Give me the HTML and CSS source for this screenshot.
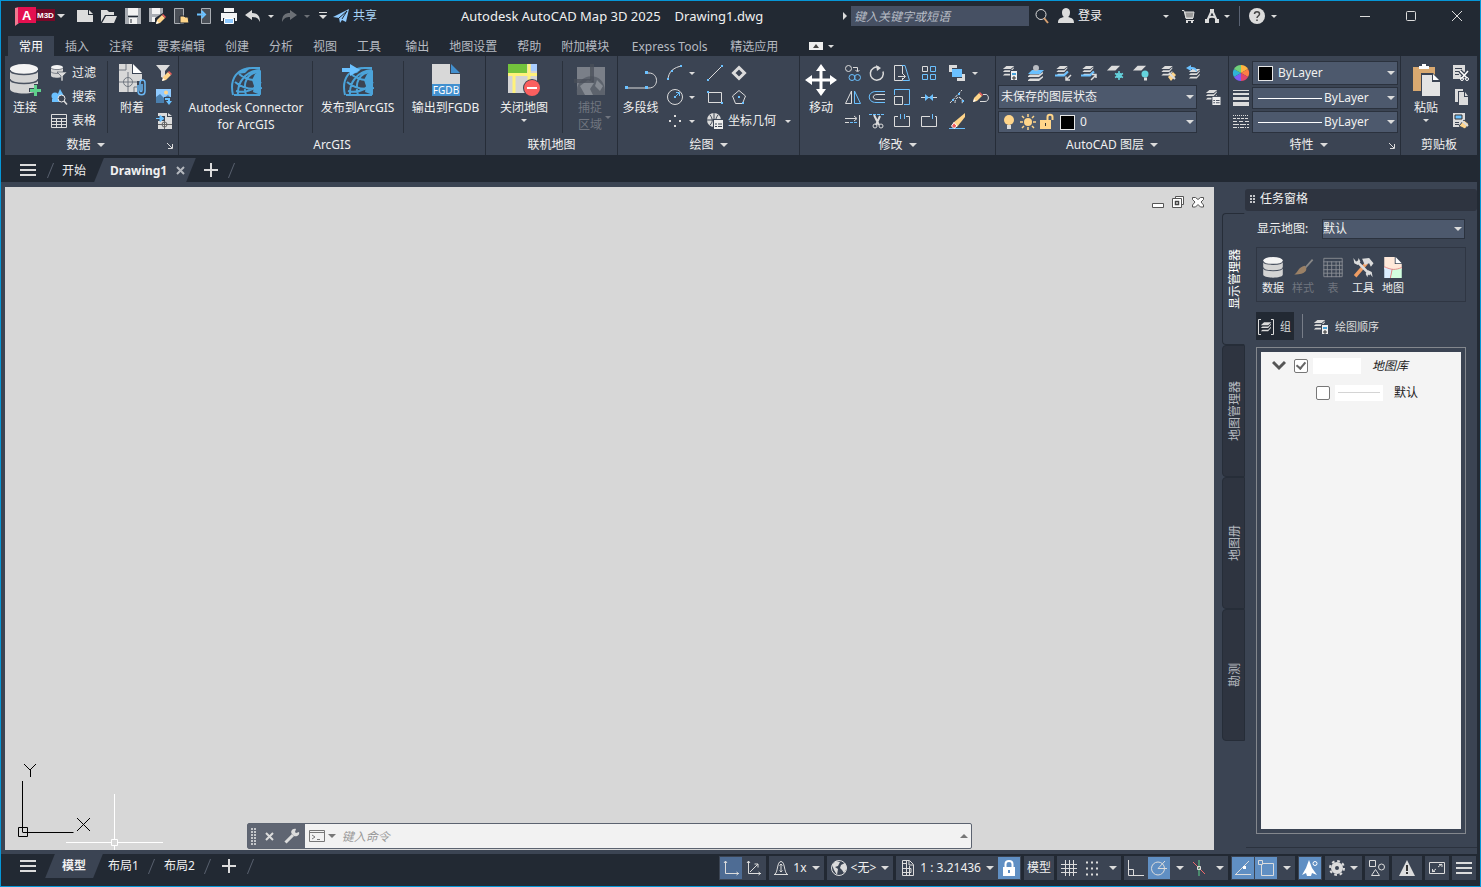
FILE: index.html
```html
<!DOCTYPE html>
<html lang="zh-CN">
<head>
<meta charset="utf-8">
<title>Autodesk AutoCAD Map 3D 2025</title>
<link rel="stylesheet" href="styles.css">
</head>
<body>
<svg class="defs" aria-hidden="true">
  <symbol id="layers" viewBox="0 0 16 16"><path d="M5 1h9l-4 3.500H1zM1 8l2-2h7l3.500-3.500V4L10 8zM1 12l2-2h7l3.500-3.500V8L10 12z" fill="#dcdcdc"/></symbol>
  <symbol id="sheet" viewBox="0 0 16 16"><path d="M6 3h9l-5 5H1z" fill="#dcdcdc"/></symbol>
  <symbol id="db" viewBox="0 0 28 30"><path d="M0 5v20c0 6 28 6 28 0V5z" fill="#d4d4d4"/><ellipse cx="14" cy="5" rx="14" ry="5" fill="#f4f4f4"/><path d="M0 6c0 6 28 6 28 0M0 15c0 6 28 6 28 0" fill="none" stroke="#4a5260" stroke-width="1.500"/></symbol>
  <symbol id="arc" viewBox="0 0 32 32"><path d="M3 31C-1 14 8 4 22 4h8M8 31C7 18 16 7 30 6M16 31C12 18 18 8 30 8M5 18c7 6 17 8 27 6M9 10c7 6 14 7 21 5M6 27c8 2 17 0 25-9M4 31h26" fill="none" stroke="#4ba3d9" stroke-width="2"/><path d="M22 16l3-6 6-4v25l-8-3 1-6zM7 10l6-5 8-2-6 6z" fill="#4ba3d9"/></symbol>
  <symbol id="list" viewBox="0 0 10 10"><path d="M0 0h10v10H0z" fill="#3b4453"/><path d="M1 1h9v9H1z" fill="#eee"/><path d="M2 5h2M5 5h4M2 7.500h2M5 7.500h4" stroke="#3b4453"/></symbol>
  <symbol id="pencil" viewBox="0 0 10 10"><path d="M0 10l1-4 5-5 3 3-5 5z" fill="#ffd58a"/><path d="M6 1l1-1 3 3-1 1z" fill="#f05b5b"/><path d="M0 10l1-3 2 2z" fill="#fff"/></symbol>
</svg>

<header class="titlebar">
  <div class="quick">
    <button class="logo" aria-label="应用程序菜单"><svg viewBox="0 0 42 19"><path d="M1 1l4-1v16l-4 3z" fill="#f07a90"/><path d="M4 0h18v16H4z" fill="#e51050"/><path d="M22 2h19v12H22z" fill="#7a0828"/><text x="8" y="13" class="logo-a">A</text><text x="23" y="11" class="logo-m">M3D</text></svg></button>
    <span class="caret lead"></span>
    <button class="q" aria-label="新建"><svg class="i" viewBox="0 0 16 16"><path class="fl" d="M0 2h11v5h5v7H0zM12 2l4 4h-4z"/></svg></button>
    <button class="q" aria-label="打开"><svg class="i" viewBox="0 0 16 16"><path class="fl" d="M0 2h6l2 2h5v3H4L0 14zM5 8h11l-3 7H1z"/></svg></button>
    <button class="q" aria-label="保存"><svg class="i" viewBox="0 0 16 16"><path fill="#a9adb3" stroke="none" d="M0 0h16v16H0z"/><path fill="#f3f3f3" stroke="none" d="M3 0h10v7H3zM4 10h8v6H4z"/><path stroke="#222933" d="M3 8.500h10M6 11v4"/></svg></button>
    <button class="q" aria-label="另存为"><svg class="i" viewBox="0 0 16 16"><path fill="#a9adb3" stroke="none" d="M0 0h14v14H0z"/><path fill="#f3f3f3" stroke="none" d="M3 0h8v6H3zM3 9h6v5H3z"/><path fill="#222933" stroke="none" d="M6 16V10l8-5 2 3v8z"/><use href="#pencil" x="7" y="6" width="10" height="10"/></svg></button>
    <button class="q" aria-label="从移动设备打开"><svg class="i" viewBox="0 0 16 16"><path d="M1.500.5h9v15h-9z" fill="#4a4f57" stroke="#a9adb3"/><path d="M7 8h4l1 1h3l1 6H7z" fill="#ffd58a" stroke="#222933"/></svg></button>
    <button class="q" aria-label="保存到移动设备"><svg class="i" viewBox="0 0 16 16"><path d="M4.500.5h9v15h-9z" fill="#4a4f57" stroke="#a9adb3"/><path d="M0 6.500h7M4.500 3L8 6.500 4.500 10" stroke="#6bc1ff" stroke-width="2"/></svg></button>
    <button class="q" aria-label="打印"><svg class="i" viewBox="0 0 16 16"><path fill="#f3f3f3" stroke="none" d="M3 0h10v4H3zM0 5h16v8h-2v-3H2v3H0z"/><path fill="#8fcaff" stroke="#fff" d="M3.500 10.500h9v5h-9z"/></svg></button>
    <button class="q" aria-label="放弃"><svg class="i" viewBox="0 0 16 16"><path class="fl" d="M0 7l7-5v3c5 0 8 2 8 9-2-4-4-5-8-5v3z"/></svg></button>
    <span class="caret small"></span>
    <button class="q" aria-label="重做"><svg class="i dim" viewBox="0 0 16 16"><path class="fl" d="M16 7L9 2v3C4 5 1 7 1 14c2-4 4-5 8-5v3z"/></svg></button>
    <span class="caret small dim"></span>
    <button class="q narrow" aria-label="自定义"><svg class="i" viewBox="0 0 16 16"><path d="M4 4.500h8"/><path class="fl" d="M4 7h8l-4 4z"/></svg></button>
    <button class="share"><svg class="i" viewBox="0 0 16 16"><path d="M0 9L16 1 13 14 9 12 7 15 6 10z" fill="#8fcaff" stroke="none"/><path d="M6 10l8-7-5 8" stroke="#222933"/></svg>共享</button>
  </div>
  <div class="title"><span>Autodesk AutoCAD Map 3D 2025</span><span>Drawing1.dwg</span></div>
  <div class="infocenter">
    <span class="caret right"></span>
    <input class="search" type="text" aria-label="搜索" placeholder="键入关键字或短语">
    <button class="q" aria-label="搜索"><svg class="i" viewBox="0 0 16 16"><circle cx="7" cy="6.500" r="5"/><path d="M10 10l4 5" stroke="#d8a070" stroke-width="2"/></svg></button>
    <button class="login"><svg class="i" viewBox="0 0 16 16"><path class="fl" d="M8 0c6 0 4 9 2 9 3 1 6 1 6 6H0c0-5 3-5 6-6C4 9 2 0 8 0z"/></svg>登录</button>
    <span class="caret small"></span>
    <button class="q cart" aria-label="购物车"><svg class="i" viewBox="0 0 16 16"><path d="M2 2.500h2l2 8h7M6 12.500h8"/><path d="M5 4h9l-1 6H6z" fill="#999" stroke="#dcdcdc"/><path class="fl" d="M6 13h2v2H6zM11 13h2v2h-2z"/></svg></button>
    <button class="q" aria-label="Autodesk App Store"><svg class="i" viewBox="0 0 16 16"><path d="M8 2L3 13M8 2l5 11M4 10c3-2 5-2 8 0" stroke-width="2"/><path class="fl" d="M6 1h4v4H6zM1 11h4v4H1zM11 11h4v4h-4z"/></svg></button>
    <span class="caret small"></span>
    <span class="rule"></span>
    <button class="q" aria-label="帮助"><svg class="i" viewBox="0 0 16 16"><circle class="fl" cx="8" cy="8" r="8"/><path d="M5.500 6c0-3 5-3 5 0 0 2-2.500 2-2.500 4M8 11.500v1.500" stroke="#444" stroke-width="1.500"/></svg></button>
    <span class="caret small last"></span>
  </div>
  <div class="winctl">
    <button aria-label="最小化"><svg class="i" viewBox="0 0 16 16"><path d="M3 8.500h10"/></svg></button>
    <button aria-label="最大化"><svg class="i" viewBox="0 0 16 16"><rect x="3.500" y="3.500" width="9" height="9" rx="1"/></svg></button>
    <button aria-label="关闭"><svg class="i" viewBox="0 0 16 16"><path d="M3 3l10 10M13 3L3 13"/></svg></button>
  </div>
</header>

<nav class="tabs">
  <button class="active">常用</button><button>插入</button><button>注释</button><button class="set">要素编辑</button><button>创建</button><button>分析</button><button>视图</button><button>工具</button><button class="set">输出</button><button>地图设置</button><button>帮助</button><button>附加模块</button><button class="express">Express Tools</button><button>精选应用</button>
  <button class="collapse" aria-label="最小化功能区"><svg viewBox="0 0 14 8"><path d="M0 0h14v8H0z" fill="#eee"/><path d="M4 6l3-4 3 4z" fill="#444"/></svg></button><span class="caret small"></span>
</nav>

<section class="ribbon">
  <div class="panel">
    <div class="body">
      <button class="big"><svg class="i32" viewBox="0 0 32 32"><use href="#db" x="1" y="0" width="28" height="30"/><path d="M20 24h5v-4h5v4h3v4h-3v4h-5v-4h-5z" fill="#3b4453"/><path d="M21 26.500h11M26.500 21v11" stroke="#5ed28c" stroke-width="3"/></svg>连接</button>
      <div class="stack">
        <button class="row"><svg class="i" viewBox="0 0 16 16"><use href="#db" x="0" y="0" width="12" height="13"/><path d="M6 7h10l-4 4v5h-2v-5z" fill="#dcdcdc" stroke="#3b4453" stroke-width=".6"/></svg>过滤</button>
        <button class="row"><svg class="i" viewBox="0 0 16 16"><path class="fb" d="M9 0l4 7H6z"/><circle class="fb" cx="4" cy="7" r="3.500"/><path class="fb" d="M1 10h7v3H1z"/><circle cx="10.500" cy="9.500" r="3.500" fill="#3b4453" stroke="#eee"/><path d="M13 12l3 3.500" stroke-width="1.500"/></svg>搜索</button>
        <button class="row"><svg class="i" viewBox="0 0 16 16"><path d="M.5 1.500h15v13H.5zM0 5.500h16M0 8.500h16M0 11.500h16M5.500 5v10M10.500 5v10"/></svg>表格</button>
      </div>
      <span class="vr"></span>
      <button class="big attach"><svg class="i32" viewBox="0 0 32 32"><path d="M3 0h13v10h10v18H3z" fill="#d8d8d8"/><path d="M17 0l9 9h-9z" fill="#fff"/><path d="M3 6h7v-6M3 18h22M12 8v20M18 28v-5h8" fill="none" stroke="#707780"/><circle cx="12" cy="18" r="4.500" fill="none" stroke="#707780"/><path d="M21 17h8v15h-8z" fill="#3b4453"/><path d="M26 20v6c0 2-2 2-2 0v-7c0-4 5-4 5 0v8c0 5-7 5-7 0v-6" fill="none" stroke="#6bb8f5" stroke-width="1.500"/></svg>附着</button>
      <div class="stack tight">
        <button class="sq" aria-label="过滤编辑"><svg class="i" viewBox="0 0 16 16"><path class="fl" d="M0 0h14L9 6v8L5 12V6z"/><use href="#pencil" x="6" y="6" width="10" height="10"/></svg></button>
        <button class="sq" aria-label="图像"><svg class="i" viewBox="0 0 16 16"><path fill="#8fcaff" stroke="none" d="M0 0h15v14H0z"/><path d="M0 14V8l4-3 4 4 4-3 3 3v5z" fill="#4a7fae" stroke="none"/><circle cx="10" cy="3.500" r="2" fill="#ffd58a" stroke="none"/><path d="M8 8h8v8H8z" fill="#3b4453" stroke="none"/><path class="fb" d="M9 9h5v3h2l-3 4-3-4h2v-1H9z"/></svg></button>
        <button class="sq" aria-label="输入"><svg class="i" viewBox="0 0 16 16"><path class="fl" d="M2 0h9v4h5v12H2zM12 0l4 3h-4z"/><path d="M2 11.500h14M8.500 7v9" stroke="#666"/><circle cx="8.500" cy="11.500" r="2.500" stroke="#666"/><path d="M0 3h9v5H0z" fill="#3b4453" stroke="none"/><path d="M0 5.500h6M4 2.500l4 3-4 3z" stroke="#6bc1ff" fill="#6bc1ff"/></svg></button>
      </div>
    </div>
    <div class="cap haslaunch"><span>数据</span><span class="caret"></span><svg class="launch" viewBox="0 0 7 7"><path d="M0 0l5 5M5.500 1v4.500H1"/></svg></div>
  </div>

  <div class="panel">
    <div class="body even arcgis">
      <button class="big"><svg class="i32" viewBox="0 0 32 32"><use href="#arc" width="32" height="32"/></svg>Autodesk Connector<br>for ArcGIS</button>
      <span class="vr"></span>
      <button class="big"><svg class="i32" viewBox="0 0 32 32"><use href="#arc" width="32" height="32"/><path d="M0 4h8V0l10 6-10 6V8H0z" fill="#6bc1ff"/></svg>发布到ArcGIS</button>
      <span class="vr"></span>
      <button class="big"><svg class="i32" viewBox="0 0 32 32"><path d="M2 0h18v10h10v10H2z" fill="#d8d8d8"/><path d="M21 0l9 9h-9z" fill="#4290cf"/><path d="M2 20h28v12H2z" fill="#4290cf"/><text x="16" y="30" class="fgdb">FGDB</text></svg>输出到FGDB</button>
    </div>
    <div class="cap"><span>ArcGIS</span></div>
  </div>

  <div class="panel">
    <div class="body online">
      <button class="big"><svg class="i32" viewBox="0 0 32 32"><path d="M0 0h29v29H0z" fill="#d4d4d4"/><path d="M0 0h19v9H0z" fill="#73c33c"/><path d="M23 0h6v7h-6z" fill="#a9cdff"/><path d="M0 10.500h29M21 0v20M6 11v18" stroke="#fff27a" stroke-width="3"/><circle cx="24" cy="24" r="9" fill="#3b4453"/><circle cx="24" cy="24" r="8" fill="#fb5f5f"/><path d="M19 24h10" stroke="#fff" stroke-width="2"/></svg>关闭地图<span class="caret small"></span></button>
      <span class="vr"></span>
      <button class="big dimmed" disabled><svg class="i32" viewBox="0 0 32 32"><path d="M3 3h28v28H3z" fill="#7a7f88"/><path d="M3 31C1 17 12 10 22 13c8 3 9 10 9 18z" fill="#5d636d"/><path d="M6 22l8-6 6 3-4 6 3 6h-8zM23 16l6 6-3 5-5-5z" fill="#858a92"/><path d="M0 18h19V0M0 16h17V0" fill="none" stroke="#4a4f59" stroke-width="1.500"/></svg>捕捉<br>区域<span class="caret small side"></span></button>
    </div>
    <div class="cap"><span>联机地图</span></div>
  </div>

  <div class="panel">
    <div class="body">
      <button class="big polyline"><svg class="i32" viewBox="0 0 32 32"><path d="M2 24h19M21 9h3c10 0 10 15 0 15h-3" fill="none" stroke="#dcdcdc"/><path d="M0 22h3v3H0zM20 22h3v3h-3zM20 7h3v3h-3z" fill="#6bc1ff"/></svg>多段线</button>
      <div class="grid draw">
        <button class="sq" aria-label="圆弧"><svg class="i" viewBox="0 0 16 16"><path d="M1 15C1 7 7 2 15 1"/><path class="fb" d="M0 13h2v2H0zM4 5h2v2H4zM13 0h2v2h-2z"/></svg></button><span class="caret small"></span>
        <button class="sq" aria-label="直线"><svg class="i" viewBox="0 0 16 16"><path d="M1 15L15 1"/><path class="fb" d="M0 14h2v2H0zM14 0h2v2h-2z"/></svg></button>
        <button class="sq" aria-label="多边形对象"><svg class="i" viewBox="0 0 16 16"><path d="M8 2.500L13.500 8 8 13.500 2.500 8z" stroke-width="3"/></svg></button>
        <button class="sq" aria-label="圆"><svg class="i" viewBox="0 0 16 16"><circle cx="8" cy="8" r="7.500"/><path class="sb" d="M8 8l4-4M9 3.500h3.500V7"/><path class="fb" d="M7 7h2v2H7z"/></svg></button><span class="caret small"></span>
        <button class="sq" aria-label="矩形"><svg class="i" viewBox="0 0 16 16"><path d="M1.500 3.500h13v10h-13z"/><path class="fb" d="M0 2h2v2H0zM14 13h2v2h-2z"/></svg></button>
        <button class="sq" aria-label="正多边形"><svg class="i" viewBox="0 0 16 16"><path d="M8 1.500L14.500 7l-3 7.500h-7L1.500 7z"/><path class="fb" d="M7 7h2v2H7zM11 13h2v2h-2z"/></svg></button>
        <button class="sq" aria-label="点"><svg class="i" viewBox="0 0 16 16"><path class="fl" d="M7 2h2v2H7zM2 7h2v2H2zM12 7h2v2h-2zM7 12h2v2H7z"/></svg></button><span class="caret small"></span>
        <button class="row wide"><svg class="i" viewBox="0 0 16 16"><circle class="fl" cx="7" cy="7" r="7"/><path d="M0 7h14M7 0v14M3 2c3 4 3 7 0 10M11 2c-3 4-3 7 0 10" stroke="#3b4453"/><use href="#list" x="6" y="6" width="10" height="10"/></svg>坐标几何<span class="caret small"></span></button>
      </div>
    </div>
    <div class="cap"><span>绘图</span><span class="caret"></span></div>
  </div>

  <div class="panel">
    <div class="body modbody">
      <button class="big"><svg class="i32" viewBox="0 0 32 32"><path d="M16 0l5 7h-3.500v7.500H25V11l7 5-7 5v-3.500h-7.500V25H21l-5 7-5-7h3.500v-7.500H7V21l-7-5 7-5v3.500h7.500V7H11z" fill="#fff"/></svg>移动</button>
      <div class="grid modify">
        <button class="sq" aria-label="复制"><svg class="i" viewBox="0 0 16 16"><circle cx="3.500" cy="3.500" r="3"/><path d="M8 2.500h4.500V6M10.500 5l2 2 2-2"/><circle class="sb" cx="7" cy="12.500" r="3"/><circle class="sb" cx="12.500" cy="12.500" r="3"/></svg></button>
        <button class="sq" aria-label="旋转"><svg class="i" viewBox="0 0 16 16"><path d="M10 2.500a6.500 6.500 0 1 0 4 4" stroke-width="1.500"/><path class="fl" d="M7 0l5 3-4 3z"/></svg></button>
        <button class="sq" aria-label="拉伸"><svg class="i" viewBox="0 0 16 16"><path d="M8.500 9V.5h-8v15h8V13M4 11.500h7M9 9l2.500 2.500L9 14"/><path class="sb" d="M8 .5h3l4.500 15H9"/></svg></button>
        <button class="sq" aria-label="阵列"><svg class="i" viewBox="0 0 16 16"><path d="M1.500 1.500h5v5h-5z"/><path class="sb" d="M9.500 1.500h5v5h-5zM1.500 9.500h5v5h-5zM9.500 9.500h5v5h-5z"/></svg></button>
        <button class="sq" aria-label="绘图次序"><svg class="i" viewBox="0 0 16 16"><path class="fl" d="M0 0h8v3H3v4H0zM16 16H8v-3h5V9h3z"/><path class="fb" d="M3 4h10v8H3z"/></svg></button><span class="caret small"></span>
        <button class="sq" aria-label="镜像"><svg class="i" viewBox="0 0 16 16"><path d="M6.500 2v12.500h-6z"/><path class="sb" d="M9.500 2v12.500h6z"/></svg></button>
        <button class="sq" aria-label="偏移"><svg class="i" viewBox="0 0 16 16"><path class="sb" d="M16 2.500H7c-9 0-9 11 0 11h9"/><path d="M16 5.500H8c-5 0-5 5 0 5h8"/></svg></button>
        <button class="sq" aria-label="缩放"><svg class="i" viewBox="0 0 16 16"><path class="sb" d="M.5 6V.5h15v15H10"/><path d="M.5 7.500h8v8h-8z"/></svg></button>
        <button class="sq" aria-label="合并"><svg class="i" viewBox="0 0 16 16"><path d="M0 8.500h16"/><path class="fb" d="M4 5l4 3.500L4 12zM12 5L8 8.500 12 12z"/></svg></button>
        <button class="sq" aria-label="编辑多段线"><svg class="i" viewBox="0 0 16 16"><path d="M1 14L13 1M6 14c0-9 9-6 7 1M10 8l5 4" stroke-dasharray="3 1"/><path class="fb" d="M3 10h2v2H3zM9 4h2v2H9zM13 11h2v2h-2z"/></svg></button>
        <button class="sq" aria-label="样条曲线"><svg class="i" viewBox="0 0 16 16"><path d="M7 12.500h5c5 0 4-8 0-7h-2"/><use href="#pencil" x="0" y="3" width="10" height="10"/></svg></button>
        <button class="sq" aria-label="延伸"><svg class="i" viewBox="0 0 16 16"><path d="M0 5.500h11M9 3l3 2.500L9 8M14.500 2v12M0 9.500h4"/><path class="sb" d="M5 9.500h8" stroke-dasharray="3 1"/></svg></button>
        <button class="sq" aria-label="修剪"><svg class="i" viewBox="0 0 16 16"><path d="M5 2l5 10M11 3L7 12" stroke-width="2"/><circle cx="6" cy="13" r="2"/><circle cx="12" cy="13" r="2"/><path class="sb" d="M0 1.500h16" stroke-dasharray="3 1"/></svg></button>
        <button class="sq" aria-label="打断"><svg class="i" viewBox="0 0 16 16"><path d="M4 3.500H.5v10h15v-10H12"/><path class="sb" d="M6.500 1v5M10.500 1v5"/></svg></button>
        <button class="sq" aria-label="打断于点"><svg class="i" viewBox="0 0 16 16"><path d="M9 3.500H.5v10h15v-10H14"/><path class="sb" d="M11.500 1v5"/></svg></button>
        <button class="sq" aria-label="删除"><svg class="i" viewBox="0 0 16 16"><path d="M0 15.500h16" class="sb"/><path fill="#ffd58a" stroke="none" d="M16 0v4L8 14l-4-4z"/><path fill="#f05b5b" stroke="#fff" d="M5 9.500L8 13l-3 2.500L2.500 13z"/></svg></button>
      </div>
    </div>
    <div class="cap"><span>修改</span><span class="caret"></span></div>
  </div>

  <div class="panel">
    <div class="body layerbody">
      <div class="layericons">
        <button class="sq" aria-label="图层特性"><svg class="i" viewBox="0 0 16 16"><use href="#layers" width="14" height="14"/><path d="M8.500 5.500h7v10h-7z" fill="#eee" stroke="#3b4453"/><path d="M10 8h4v2h-4z" fill="#4ba3d9" stroke="none"/><path d="M10 13h4M12 11v4" stroke="#333"/></svg></button>
        <button class="sq" aria-label="置为当前"><svg class="i" viewBox="0 0 16 16"><path class="fl" d="M0 11l2-1.500h9L15 7v1.500L11 12H0zM0 15l2-1.500h9L15 11v1.500L11 16H0z"/><path class="fb" d="M4 5h12l-4 4H0z"/><circle cx="8" cy="3" r="3" fill="#b9bcc2" stroke="none"/></svg></button>
        <button class="sq" aria-label="匹配图层"><svg class="i" viewBox="0 0 16 16"><use href="#layers" width="15" height="14"/><path class="sb" d="M0 10.500h9l4-4" stroke-width="2"/><path d="M16 10l-5 5M11 11.500V15h4" stroke-width="1.500"/></svg></button>
        <button class="sq" aria-label="上一个"><svg class="i" viewBox="0 0 16 16"><use href="#layers" width="15" height="14"/><path class="sb" d="M0 10.500h9l4-4" stroke-width="2"/><path d="M10 15l5-5M11 9.500h4V13" stroke-width="1.500"/></svg></button>
        <button class="sq" aria-label="冻结"><svg class="i" viewBox="0 0 16 16"><use href="#sheet" x="-1" y="-2" width="15" height="15"/><path d="M12 6v9M8 8.500l8 4M16 8.500l-8 4" stroke="#65d4de" stroke-width="1.500"/><circle cx="12" cy="10.500" r="2.500" stroke="#65d4de"/></svg></button>
        <button class="sq" aria-label="关闭图层"><svg class="i" viewBox="0 0 16 16"><use href="#sheet" x="-1" y="-2" width="15" height="15"/><circle cx="12" cy="9" r="3.500" fill="#65d4de" stroke="none"/><path d="M11 14h3" stroke-width="3"/></svg></button>
        <button class="sq" aria-label="锁定"><svg class="i" viewBox="0 0 16 16"><use href="#layers" width="15" height="14"/><path d="M8 12l5-5 3 3-5 6z" fill="#ffd58a" stroke="none"/><path d="M9 8l6 6" stroke-width="2"/></svg></button>
        <button class="sq" aria-label="恢复"><svg class="i" viewBox="0 0 16 16"><use href="#layers" x="1" y="3" width="16" height="14"/><path class="fb" d="M0 3l5-3v2c4 0 6 1 6 5-2-2-3-3-6-3v2z"/></svg></button>
      </div>
      <div class="layerfields">
        <div class="fieldcol">
          <div class="field tall"><select aria-label="图层状态"><option>未保存的图层状态</option></select></div>
          <div class="field"><svg class="i" viewBox="0 0 16 16"><circle cx="8" cy="6" r="5" fill="#ffd58a" stroke="none"/><path d="M6 13h4" stroke-width="4"/></svg><svg class="i" viewBox="0 0 16 16"><circle cx="8" cy="8" r="4" fill="#ffd58a" stroke="none"/><path d="M8 0v3M8 13v3M0 8h3M13 8h3M2 2l2 2M12 12l2 2M14 2l-2 2M4 12l-2 2" stroke="#ffd58a" stroke-width="1.500"/></svg><svg class="i" viewBox="0 0 16 16"><path d="M1 6h11v9H1z" fill="#ffd58a" stroke="none"/><path d="M8.500 6V3c0-3 5-3 5 0v3" stroke="#ffd58a" stroke-width="2"/><path d="M6.500 9v3" stroke="#333"/></svg><span class="swatch"></span><select aria-label="图层"><option>0</option></select></div>
        </div>
        <button class="sq" aria-label="图层状态管理"><svg class="i" viewBox="0 0 16 16"><use href="#layers" width="14" height="14"/><use href="#list" x="6" y="7" width="10" height="9"/></svg></button>
      </div>
    </div>
    <div class="cap"><span>AutoCAD 图层</span><span class="caret"></span></div>
  </div>

  <div class="panel">
    <div class="body props">
      <svg class="i" viewBox="0 0 16 16"><path d="M8 8V0a8 8 0 0 1 7 4z" fill="#ffb340" stroke="none"/><path d="M8 8l7-4a8 8 0 0 1 0 8z" fill="#ff7f45" stroke="none"/><path d="M8 8l7 4a8 8 0 0 1-7 4z" fill="#e2466c" stroke="none"/><path d="M8 8v8a8 8 0 0 1-7-4z" fill="#7c5cf5" stroke="none"/><path d="M8 8l-7 4a8 8 0 0 1 0-8z" fill="#2fb3d6" stroke="none"/><path d="M8 8L1 4a8 8 0 0 1 7-4z" fill="#6fd07a" stroke="none"/></svg>
      <div class="field tall"><span class="swatch"></span><select aria-label="对象颜色"><option>ByLayer</option></select></div>
      <svg class="i" viewBox="0 0 16 16"><path d="M0 .5h16"/><path d="M0 4h16" stroke-width="2"/><path d="M0 8.500h16" stroke-width="3"/><path d="M0 14h16" stroke-width="4"/></svg>
      <div class="field"><span class="line"></span><select aria-label="线宽"><option>ByLayer</option></select></div>
      <svg class="i" viewBox="0 0 16 16"><path d="M0 1.500h16" stroke-dasharray="1 1"/><path d="M0 4.500h16" stroke-dasharray="3 1"/><path d="M0 7.500h16" stroke-dasharray="4 2"/><path d="M0 10.500h16" stroke-dasharray="6 1"/><path d="M0 13.500h16" stroke-dasharray="4 1 1 1"/></svg>
      <div class="field"><span class="line"></span><select aria-label="线型"><option>ByLayer</option></select></div>
    </div>
    <div class="cap haslaunch"><span>特性</span><span class="caret"></span><svg class="launch" viewBox="0 0 7 7"><path d="M0 0l5 5M5.500 1v4.500H1"/></svg></div>
  </div>

  <div class="panel">
    <div class="body clip">
      <button class="big"><svg class="i32" viewBox="0 0 32 32"><path d="M3 3h22v24H3z" fill="#d9a970"/><path d="M9 4V2h3V0h4v2h3v3H9z" fill="#fff"/><path d="M11 9h12l7 7v17H11z" fill="#3b4453"/><path d="M12 11h10v7h8v14H12z" fill="#e4e4e4"/><path d="M23 10l6 6h-6z" fill="#fff"/></svg>粘贴<span class="caret small"></span></button>
      <div class="stack tight">
        <button class="sq" aria-label="剪切"><svg class="i" viewBox="0 0 16 16"><path class="fl" d="M0 0h12v14H0z"/><path d="M2 3.500h7M2 6.500h6M2 9.500h4" stroke="#3b4453"/><path d="M7 6l7 7M15 6l-6 7" stroke="#3b4453" stroke-width="4"/><path d="M7 6l7 7M15 6l-6 7" stroke="#fff" stroke-width="1.500"/><circle cx="9" cy="14" r="1.500" stroke="#fff"/><circle cx="14" cy="14" r="1.500" stroke="#fff"/></svg></button>
        <button class="sq" aria-label="复制剪裁"><svg class="i" viewBox="0 0 16 16"><path d="M2 0h8v2H5v11H2z" class="fl"/><path d="M6 3h5v5h4v8H6zM12 3l3 4h-3z" class="fl"/></svg></button>
        <button class="sq" aria-label="特性匹配"><svg class="i" viewBox="0 0 16 16"><path class="fl" d="M0 0h12v14H0z"/><path d="M2 2h7v4H2z" fill="#6bc1ff" stroke="#333"/><path d="M2 9.500h4M2 11.500h4" stroke="#3b4453"/><path d="M6 13l5-6 5 4-4 5z" fill="#ffd58a" stroke="#3b4453"/><path d="M9 8l6 5" stroke-width="2"/></svg></button>
      </div>
    </div>
    <div class="cap"><span>剪贴板</span></div>
  </div>
</section>

<nav class="doctabs">
  <button class="menu" aria-label="菜单"></button>
  <i class="slash"></i>
  <button>开始</button>
  <button class="current"><b>Drawing1</b><svg class="x" viewBox="0 0 9 9"><path d="M1 1l7 7M8 1L1 8"/></svg></button>
  <button class="plus" aria-label="新图形"></button>
  <i class="slash"></i>
</nav>

<main class="work">
  <section class="canvas">
    <div class="mdi">
      <button aria-label="最小化"><svg viewBox="0 0 14 14"><path d="M1.500 8.500h11v4h-11z" fill="#fff" stroke="#555"/></svg></button>
      <button aria-label="还原"><svg viewBox="0 0 14 14"><path d="M4.500 1.500h8v8h-8z" fill="#fff" stroke="#555"/><path d="M1.500 3.500h9v9h-9z" fill="#fff" stroke="#555"/><path d="M4.500 6.500h3v3h-3z" fill="none" stroke="#444" stroke-width="1.500"/></svg></button>
      <button aria-label="关闭"><svg viewBox="0 0 14 14"><path d="M1.500 2.500h3l2.500 2 2.500-2h3v2L10 7l2.500 3v2h-3L7 9.500 4.500 12h-3v-2L4 7 1.500 4.500z" fill="#fff" stroke="#555"/></svg></button>
    </div>
    <svg class="ucs" viewBox="0 0 160 90"><g fill="none" stroke="#000"><path d="M17.500 21v51M17.500 72.500h51M13.500 67.500h9v9h-9zM19 4l6 6 6-6M25.500 10v7M72 58l13 13M85 58L72 71"/></g><g fill="none" stroke="#fff"><path d="M109.500 34v45M109.500 86v4M61 82.500h45M113 82.500h45M106.500 79.500h6v6h-6z"/></g></svg>
    <div class="cmd">
      <div class="cmdgrip"><span class="dots"></span><svg class="x" viewBox="0 0 9 9"><path d="M1 1l7 7M8 1L1 8"/></svg><svg class="i" viewBox="0 0 16 16"><path d="M1.500 14.500L9 7" stroke-width="3"/><path d="M15 4l-3 1-1-1 1-3C8 0 6 4 8 6l2 2c3 1 6-1 5-4z" class="fl"/></svg></div>
      <svg class="prompt" viewBox="0 0 16 12"><path d="M.5.5h15v11H.5zM0 2.500h16M3 5l3 2-3 2M8 9.500h3" fill="none" stroke="#777"/></svg><span class="caret gray"></span>
      <input type="text" aria-label="命令" placeholder="键入命令">
      <span class="caret gray up"></span>
    </div>
  </section>

  <aside class="taskpane">
    <div class="vtabs">
      <button class="active"><span>显示管理器</span></button><button><span>地图管理器</span></button><button><span>地图册</span></button><button><span>勘测</span></button>
    </div>
    <div class="pane">
      <h2><span class="dots"></span>任务窗格</h2>
      <div class="panebody">
        <div class="maprow"><label for="map">显示地图:</label><div class="field"><select id="map"><option>默认</option></select></div></div>
        <div class="tools">
          <button><svg viewBox="0 0 24 24"><use href="#db" x="0" y="0" width="24" height="24"/></svg>数据</button>
          <button disabled><svg viewBox="0 0 24 24"><path d="M23 3l-9 10" stroke="#888" stroke-width="2"/><path d="M14 10c4 4 2 10-12 10 5-3 4-8 12-10z" fill="#9b8166"/></svg>样式</button>
          <button disabled><svg viewBox="0 0 24 24"><path d="M1.500 1.500h21v21h-21zM1 5.500h22M1 9.500h22M1 14.500h22M1 18.500h22M5.500 5v18M10.500 5v18M15.500 5v18M19.500 5v18" fill="none" stroke="#8b8f96"/></svg>表</button>
          <button><svg viewBox="0 0 24 24"><path d="M3 22L16 7" stroke="#ef9d63" stroke-width="4"/><path d="M11 2l8-1 5 6-3 4-2-4-5 2z" fill="#dcdcdc"/><path d="M5 5l15 15" stroke="#dcdcdc" stroke-width="3"/><path d="M1 1l1 6 4 2 3-4-2-4-1 4-2 0zM23 23l-1-6-4-2-3 4 2 4 1-4 2 0z" fill="#dcdcdc"/></svg>工具</button>
          <button><svg viewBox="0 0 24 24"><path d="M2 0h12v8h8v6H2z" fill="#ffe9da"/><path d="M15 0l7 7h-7z" fill="#fff"/><path d="M2 12l9 2-2 10H2z" fill="#dcefff"/><path d="M11 14l11-1v11H9z" fill="#d2ffdf"/><path d="M2 11c8 4 13 4 20 1M11 14L9 24" fill="none" stroke="#e58080"/></svg>地图</button>
        </div>
        <div class="modes">
          <button class="on"><svg class="i" viewBox="0 0 16 16"><use href="#layers" x="2" y="2" width="13" height="14"/><path d="M3 .5H.5v15H3M13 .5h2.500v15H13"/></svg>组</button>
          <span class="rule"></span>
          <button><svg class="i" viewBox="0 0 16 16"><use href="#layers" width="14" height="14"/><path d="M8.500 5.500h7v10h-7z" fill="#eee" stroke="#3b4453"/><path d="M10 8h4v2h-4z" fill="#4ba3d9" stroke="none"/><path d="M10 13h4M12 11v4" stroke="#333"/></svg>绘图顺序</button>
        </div>
        <div class="tree"><div class="treein">
          <div class="node"><svg class="chev" viewBox="0 0 14 12"><path d="M1 2l6 6 6-6" fill="none" stroke="#555" stroke-width="3"/></svg><input type="checkbox" id="n1" checked><span class="chip"></span><label for="n1"><em>地图库</em></label></div>
          <div class="node child"><input type="checkbox" id="n2"><span class="chip lined"></span><label for="n2">默认</label></div>
        </div></div>
      </div>
    </div>
  </aside>
</main>

<footer class="status">
  <nav class="layouts">
    <button class="menu" aria-label="菜单"></button>
    <button class="current">模型</button>
    <button>布局1</button><i class="slash"></i>
    <button>布局2</button><i class="slash"></i>
    <button class="plus" aria-label="新建布局"></button><i class="slash"></i>
  </nav>
  <div class="modesbar">
    <div class="grp"><button class="on soft" aria-label="模型空间坐标"><svg class="i" viewBox="0 0 16 16"><path d="M2.500 1v12.500H16M1 3l1.500-2L4 3M13.500 12l2 1.500-2 1.500"/></svg></button><button aria-label="动态坐标"><svg class="i" viewBox="0 0 16 16"><path d="M2.500 1v12.500H15M1 3l1.500-2L4 3M4 12l8-8M8.500 4H12v3.500M12.500 12l2 1.500-2 1.500"/></svg></button></div>
    <div class="grp"><button><svg class="i" viewBox="0 0 16 16"><path d="M1 14.500h14M2 14C5 12 4 1.500 8 1.500S11 12 14 14M8 4v8M6.500 5.500L8 4l1.500 1.500M6.500 10.500L8 12l1.500-1.500"/></svg>1x<span class="caret"></span></button></div>
    <div class="grp"><button><svg class="i" viewBox="0 0 16 16"><circle cx="8" cy="8" r="7.500"/><path class="fl" d="M1 5l4-4 4 1-2 4-3 1 3 2-1 6-3-5zM10 5l4-2 2 5-3 5-2-3-2-2z"/></svg>&lt;无&gt;<span class="caret"></span></button></div>
    <div class="grp"><button><svg class="i" viewBox="0 0 16 16"><path d="M2.500.5h7l4 4v11h-11zM9 1v4h4M2 3.500h4M6.500 0v16M2 8.500h9v4H2M9.500 6v9"/></svg><span>1 : 3.21436</span><span class="caret"></span></button><button class="on" aria-label="锁定"><svg class="i" viewBox="0 0 16 16"><path d="M2 7h12v9H2z" fill="#fff" stroke="none"/><path d="M4.500 7V4c0-4 7-4 7 0v3" stroke="#fff" stroke-width="2"/><path d="M8 10v3" stroke="#608fc3" stroke-width="2"/></svg></button></div>
    <div class="grp"><button class="word">模型</button></div>
    <div class="grp"><button aria-label="栅格"><svg class="i" viewBox="0 0 16 16"><path d="M4.500 0v16M8.500 0v16M12.500 0v16M0 4.500h16M0 8.500h16M0 12.500h16"/></svg></button><button aria-label="捕捉"><svg class="i" viewBox="0 0 16 16"><path d="M2 2.500h14M2 8.500h14M2 14.500h14" stroke-width="2" stroke-dasharray="2 3"/></svg></button><button class="drop" aria-label="捕捉设置"><span class="caret"></span></button></div>
    <div class="grp"><button aria-label="正交"><svg class="i" viewBox="0 0 16 16"><path d="M.5 0v15.500H16M.5 9.500h5v6"/></svg></button><button class="on" aria-label="极轴"><svg class="i" viewBox="0 0 16 16"><circle cx="7" cy="8.500" r="6.500"/><path d="M7 8.500h9M7 8.500L14 1"/></svg></button><button class="drop" aria-label="极轴设置"><span class="caret"></span></button><button aria-label="等轴测"><svg class="i" viewBox="0 0 16 16"><path d="M2 2l12 12" stroke="#f06a6a"/><path d="M8 0v16" stroke="#5ed28c"/><path d="M6.500 6.500h3v3h-3z"/></svg></button><button class="drop" aria-label="等轴测设置"><span class="caret"></span></button></div>
    <div class="grp"><button class="on" aria-label="对象捕捉追踪"><svg class="i" viewBox="0 0 16 16"><path d="M0 14.500h16M1 14L14 1"/><path d="M8 6h3v3H8z" fill="#fff" stroke="none"/></svg></button><button class="on" aria-label="对象捕捉"><svg class="i" viewBox="0 0 16 16"><path d="M3.500 4v11.500h12V3.500H5M.5.5h4v4h-4z"/></svg></button><button class="drop" aria-label="对象捕捉设置"><span class="caret"></span></button></div>
    <div class="grp"><button class="on" aria-label="注释可见性"><svg class="i" viewBox="0 0 16 16"><path d="M7 0l3 8 5 7-5-2-1 3H5l-1-3-4 2 4-7z" fill="#fff" stroke="none"/><circle cx="13" cy="3.500" r="2" stroke="#fff"/></svg></button></div>
    <div class="grp"><button aria-label="设置"><svg class="i" viewBox="0 0 16 16"><circle cx="8" cy="8" r="4" stroke-width="4"/><circle cx="8" cy="8" r="7" stroke-width="2" stroke-dasharray="2.750 2.750"/></svg><span class="caret"></span></button></div>
    <div class="grp"><button aria-label="隔离对象"><svg class="i" viewBox="0 0 16 16"><path d="M.5.5h6v6h-6zM6.500 9.500l4 6h-8z"/><circle cx="12.500" cy="7" r="3"/></svg></button></div>
    <div class="grp"><button class="word" aria-label="警告"><svg class="i" viewBox="0 0 16 16"><path class="fl" d="M8 0l8 16H0z"/><path d="M8 5v6M8 12v2" stroke="#333" stroke-width="2"/></svg></button></div>
    <div class="grp"><button aria-label="全屏"><svg class="i" viewBox="0 0 16 16"><path d="M.5 2.500h15v11H.5zM9 7l4-3M10 4.500h3V7M7 9l-4 3M3.500 9v2.500H6"/></svg></button></div>
    <div class="grp"><button class="menu" aria-label="自定义"></button></div>
  </div>
</footer>
</body>
</html>
```
FILE: styles.css
```css
* { box-sizing: border-box; }
html, body { height: 100%; }
body {
  margin: 0;
  min-height: 100vh;
  display: flex;
  flex-direction: column;
  background: #222933;
  border: 1px solid #0696d7;
  color: #f0f0f0;
  font: 12px/16px "Noto Sans", "Noto Sans CJK SC", sans-serif;
  overflow: hidden;
}
button, input, select { font: inherit; color: inherit; }
button { border: 0; padding: 0; background: none; white-space: nowrap; }
.defs { position: absolute; width: 0; height: 0; }

.i { width: 16px; height: 16px; flex: none; display: block; fill: none; stroke: #dcdcdc; overflow: visible; }
.i use { stroke: none; }
.i32 { width: 32px; height: 32px; flex: none; display: block; }
.fl { fill: #dcdcdc; stroke: none; }
.fb { fill: #6bc1ff; stroke: none; }
.sb { stroke: #6bc1ff; }
.dim { opacity: .4; }
.caret { flex: none; width: 0; height: 0; border: 4px solid transparent; border-top-color: #dcdcdc; border-bottom: 0; }
.caret.small { border-width: 3px; border-bottom: 0; }
.caret.right { border: 4px solid transparent; border-left-color: #dcdcdc; border-right: 0; }
.caret.gray { border-top-color: #777; }
.caret.up { border-top: 0; border-bottom: 4px solid #777; }
.rule { width: 1px; height: 18px; background: #596273; }
.x { width: 9px; height: 9px; stroke: #b4b8be; stroke-width: 2; }

/* title bar */
.titlebar { display: flex; align-items: center; height: 30px; flex: none; }
.quick, .infocenter, .winctl { display: flex; align-items: center; }
.quick { padding-left: 13px; width: 460px; }
.logo { width: 42px; height: 19px; }
.logo svg { display: block; width: 42px; height: 19px; }
.logo-a { font: bold 13px "Liberation Sans", sans-serif; fill: #fff; }
.logo-m { font: bold 8px "Liberation Sans", sans-serif; fill: #fff; }
.caret.lead { margin: 0 8px 0 1px; }
.q { width: 24px; height: 24px; display: grid; place-items: center; }
.quick .small { margin: 0 3px; }
.q.narrow { width: 20px; }
.share, .login { display: flex; align-items: center; gap: 4px; }
.share { color: #a8d4f7; }
.title { display: flex; gap: 14px; font-size: 13px; }
.infocenter { margin: 0 65px 0 auto; }
.search { width: 178px; height: 20px; margin: 0 1px 0 4px; padding: 0 3px; border: 0; background: #465063; }
.search::placeholder { color: #b7bcc5; font-style: italic; opacity: 1; }
.login { width: 105px; margin-left: 4px; }
.q.cart { margin-left: 7px; }
.infocenter .rule { margin: 0 5px 0 9px; height: 20px; }
.infocenter .last { margin-left: 2px; }
.winctl button { width: 46px; height: 30px; display: grid; place-items: center; }

/* ribbon tabs */
.tabs { display: flex; align-items: center; height: 25px; flex: none; padding: 5px 0 0 7px; color: #b6bac1; }
.tabs button { height: 20px; padding: 2px 10px 0; }
.tabs .active { background: #3b4453; color: #fff; padding: 2px 11px 0; margin-right: 1px; }
.tabs .set { margin-left: 4px; }
.tabs .express { min-width: 101px; }
.tabs .collapse { padding: 0; margin: 0 5px 0 21px; }
.collapse svg { display: block; width: 14px; height: 8px; }

/* ribbon */
.ribbon {
  flex: none;
  display: grid;
  grid-template-columns: 174fr 307fr 132fr 182fr 196fr 233fr 172fr 76fr;
  margin: 0 3px 0 4px;
  background: #3b4453;
}
.panel { display: flex; flex-direction: column; border-right: 1px solid #262d38; min-width: 0; }
.panel:last-child { border-right: 0; }
.body { display: flex; height: 79px; padding-top: 5px; }
.body.even { justify-content: space-around; }
.cap { height: 20px; display: flex; align-items: center; justify-content: center; gap: 6px; position: relative; }
.haslaunch { padding-right: 12px; }
.launch { position: absolute; right: 4px; bottom: 5px; width: 7px; height: 7px; fill: none; stroke: #dcdcdc; }
.big { display: flex; flex-direction: column; align-items: center; padding: 3px 3px 0; min-width: 40px; text-align: center; position: relative; line-height: 17px; }
.big .i32 { margin-bottom: 3px; }
.big .caret { margin-top: 3px; }
.arcgis { padding-left: 4px; }
.fgdb { font: 10px "Noto Sans", sans-serif; fill: #fff; text-anchor: middle; }
.online .big { width: 54px; }
.online .big:first-child { width: 76px; }
.dimmed, .dimmed .caret { color: #70757f; }
.caret.side { position: absolute; right: 6px; bottom: 16px; border-top-color: #70757f; }
.attach { margin-left: 4px; }
.vr { width: 1px; height: 72px; background: #2a313c; }
.stack { display: grid; grid-auto-rows: 24px; margin-left: 6px; width: 56px; }
.stack.tight { width: 24px; margin-left: 0; }
.clip { padding-left: 5px; gap: 3px; }
.sq { display: grid; place-items: center; width: 24px; height: 24px; }
.row { display: flex; align-items: center; gap: 5px; height: 24px; }
.grid { display: grid; grid-auto-rows: 24px; align-items: center; justify-items: center; align-content: start; }
.draw { grid-template-columns: 24px 16px 24px 24px 44px; }
.draw > :nth-child(4n + 1) { grid-column: 1; }
.draw > .caret { margin-right: 6px; }
.polyline { width: 45px; }
.row.wide { grid-column: 3 / 6; justify-self: start; padding-left: 4px; }
.row.wide .caret { margin-left: 4px; }
.modbody { padding-left: 1px; }
.modify { grid-template-columns: 24px 24px 26px 28px 28px 20px; }
.modify > .caret { margin-right: 12px; }
.layerbody { flex-direction: column; padding-left: 2px; padding-right: 3px; }
.layericons { display: flex; justify-content: space-between; height: 24px; padding-right: 19px; }
.layerfields { display: flex; gap: 4px; }
.fieldcol { flex: 1; display: grid; gap: 2px; min-width: 0; }
.field { position: relative; display: flex; align-items: center; gap: 4px; height: 22px; min-width: 0; padding-left: 3px; background: #4d596d; border: 1px solid #2b323e; }
.field.tall { height: 24px; }
.field select { flex: 1; min-width: 0; height: 100%; border: 0; padding: 0 14px 0 0; appearance: none; background: none; }
.field::after { content: ""; position: absolute; right: 2px; top: 50%; margin-top: -2px; border: 4px solid transparent; border-top-color: #dcdcdc; border-bottom: 0; pointer-events: none; }
.layerfields .field { gap: 3px; padding-left: 2px; }
.swatch { width: 15px; height: 15px; margin: 0 2px; background: #000; border: 1px solid #e8e8e8; flex: none; }
.line { flex: none; width: 64px; height: 1px; margin-left: 2px; background: #fff; }
.props { display: grid; grid-template-columns: 16px 1fr; grid-template-rows: 24px 22px 22px; gap: 2px 3px; align-items: center; padding-left: 4px; padding-right: 2px; }
.props .field { gap: 2px; }
.props .swatch { margin-right: 3px; }

/* document tabs */
.doctabs { display: flex; align-items: center; height: 27px; padding: 3px 0 0 11px; flex: none; }
.menu { width: 32px; height: 24px; display: grid; place-items: center; }
.menu::before { content: ""; width: 16px; height: 12px; background: linear-gradient(#dcdcdc 2px, transparent 2px 5px, #dcdcdc 5px 7px, transparent 7px 10px, #dcdcdc 10px); }
.slash { width: 1px; height: 15px; margin: 0 6px; background: #59616f; transform: skewX(-22deg); }
.doctabs > button:not(.menu) { padding: 2px 5px 0; }
.current { position: relative; display: flex; align-items: center; height: 24px; z-index: 0; }
.current::before { content: ""; position: absolute; inset: 0; background: #3b4453; transform: skewX(-22deg); z-index: -1; }
.doctabs > .current:not(.menu) { gap: 9px; margin: 0 6px 0 8px; padding: 1px 6px 0 11px; }
.plus { width: 26px; height: 24px; display: grid; place-items: center; }
.plus::before { content: ""; width: 14px; height: 14px; background: linear-gradient(#dcdcdc, #dcdcdc) center / 14px 2px no-repeat, linear-gradient(#dcdcdc, #dcdcdc) center / 2px 14px no-repeat; }
.doctabs .plus { width: 28px; }
.doctabs > .plus:not(.menu) { padding: 0; }

/* drawing area */
.work { flex: 1; min-height: 0; display: flex; margin: 0 3px 0 0; padding: 5px 0 4px 4px; background: #3b4453; }
.canvas { flex: 1; position: relative; background: #d7d7d7; overflow: hidden; }
.mdi { position: absolute; right: 9px; top: 8px; display: flex; gap: 6px; }
.mdi svg { display: block; width: 14px; height: 14px; }
.ucs { position: absolute; left: 0; bottom: 0; width: 160px; height: 90px; }
.cmd { position: absolute; left: 20%; right: 20%; bottom: 1px; height: 26px; display: flex; align-items: center; gap: 3px; background: #f2f2f2; border: 1px solid #5c6370; border-radius: 2px; padding-right: 3px; }
.cmdgrip { --ground: #5f6572; display: flex; align-items: center; justify-content: space-between; width: 57px; height: 100%; padding: 0 5px 0 3px; background: var(--ground); }
.cmdgrip .x { stroke: #dcdcdc; }
.dots {
  width: 5px; height: 17px;
  background:
    repeating-linear-gradient(transparent 0 2px, var(--ground) 2px 3px),
    repeating-linear-gradient(90deg, #c4c6ca 0 2px, transparent 2px 3px);
}
.prompt { width: 16px; height: 12px; margin-left: 1px; }
.cmd input { flex: 1; border: 0; background: none; outline: 0; height: 22px; padding: 0 3px; color: #222; }
.cmd input::placeholder { color: #999; font-style: italic; opacity: 1; }

/* task pane */
.taskpane { flex: 0 0 263px; display: flex; padding-left: 8px; }
.vtabs { width: 24px; padding-top: 26px; z-index: 1; }
.vtabs button { display: grid; place-items: center; width: 23px; height: 132px; padding-left: 3px; border: 1px solid #262d38; border-radius: 4px 0 0 4px; background: #2e3440; color: #b6bac1; }
.vtabs span { writing-mode: sideways-lr; }
.vtabs .active { background: #3b4453; border-right-color: #3b4453; color: #fff; }
.pane { flex: 1; display: flex; flex-direction: column; border-bottom: 1px solid #2b323e; margin: 2px 0 2px; }
.pane h2 { --ground: #2e3440; display: flex; align-items: center; gap: 5px; height: 22px; margin: 0 0 0 -1px; padding: 0 0 2px 5px; background: var(--ground); border-radius: 3px; font: inherit; }
.pane h2 .dots { height: 8px; }
.panebody { flex: 1; display: flex; flex-direction: column; padding: 7px 11px 13px 10px; }
.maprow { display: flex; align-items: center; justify-content: space-between; padding: 1px 1px 0 1px; }
.maprow .field { width: 143px; height: 20px; padding-left: 0; }
.tools { display: flex; gap: 6px; margin-top: 8px; height: 55px; padding: 5px 4px; border: 1px solid #2f3643; font-size: 11px; }
.tools button { display: flex; flex-direction: column; align-items: center; width: 24px; padding-top: 4px; gap: 2px; line-height: 16px; }
.tools svg { width: 24px; height: 24px; fill: none; }
.tools button:disabled { color: #70757f; }
.modes { display: flex; align-items: center; margin-top: 10px; height: 28px; font-size: 11px; }
.modes button { display: flex; align-items: center; gap: 6px; height: 28px; padding: 2px 3px 0 2px; color: #dcdcdc; }
.modes .on { background: #222933; }
.modes .rule { height: 24px; margin: 0 8px; background: #777d88; }
.tree { flex: 1; margin-top: 7px; padding: 4px; border: 1px solid #83878d; display: flex; }
.treein { flex: 1; background: #f4f4f4; color: #222; }
.node { display: flex; align-items: center; height: 27px; padding-left: 11px; }
.node.child { padding-left: 55px; }
.node input { appearance: none; width: 14px; height: 14px; margin: 0; border: 1px solid #777; border-radius: 2px; background: #fff; display: grid; place-items: center; }
.node input:checked::before { content: ""; width: 4px; height: 7px; margin-top: -2px; border: solid #666; border-width: 0 2px 2px 0; transform: rotate(40deg); }
.chev { width: 14px; height: 12px; margin-right: 8px; }
.chip { width: 48px; height: 16px; background: #fff; margin: 0 11px 0 5px; }
.chip.lined { display: grid; align-items: center; padding: 0 3px; }
.lined::before { content: ""; height: 1px; background: #d4d4d4; }

/* status bar */
.status { flex: none; height: 32px; display: flex; justify-content: space-between; padding-right: 4px; }
.layouts { display: flex; align-items: center; height: 24px; padding-left: 11px; }
.layouts .current { margin: 0 6px 0 6px; padding: 0 12px; font-weight: bold; }
.layouts button:not(.menu):not(.plus):not(.current) { padding: 0 4px; }
.layouts .slash { margin: 0 8px; }
.modesbar { display: flex; gap: 3px; padding-top: 2px; height: 26px; }
.grp { display: flex; align-items: center; background: #3b4453; padding: 0 1px; gap: 1px; }
.grp button { display: flex; align-items: center; justify-content: center; gap: 4px; height: 22px; min-width: 22px; padding: 0 3px; }
.grp .on { background: #608fc3; }
.grp .on.soft { background: #4e6c94; }
.grp .word { width: 28px; }
.grp .drop { min-width: 16px; }
.grp .menu { width: 22px; }
.grp .caret { margin-left: 1px; }
```
